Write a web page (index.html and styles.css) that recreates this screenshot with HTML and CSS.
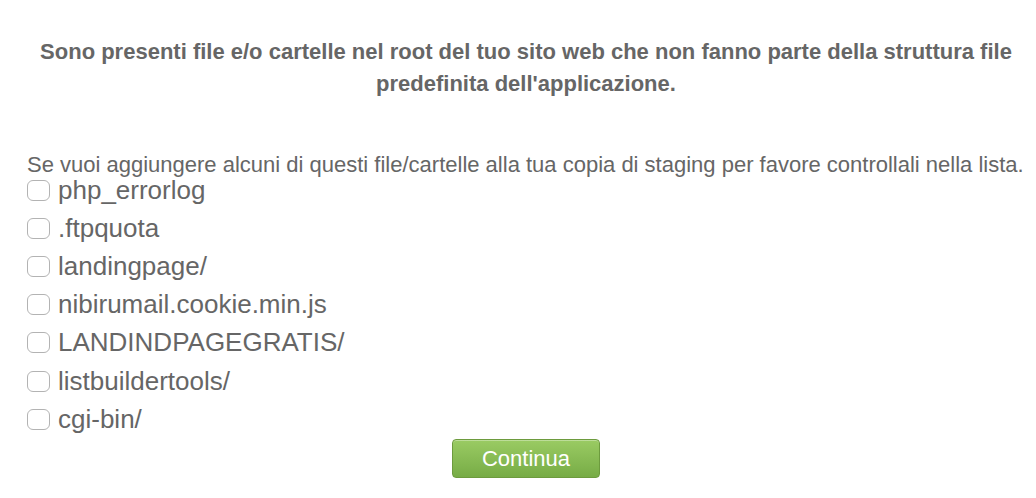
FILE: index.html
```html
<!DOCTYPE html>
<html lang="it">

<head>
    <meta charset="UTF-8">
    <meta name="viewport" content="width=device-width, initial-scale=1.0">
    <title>Staging</title>
    <link rel="stylesheet" href="styles.css">
</head>

<body>
    <main class="panel">
        <h2 class="notice">Sono presenti file e/o cartelle nel root del tuo sito web che non fanno parte della struttura file predefinita dell'applicazione.</h2>

        <p class="hint">Se vuoi aggiungere alcuni di questi file/cartelle alla tua copia di staging per favore controllali nella lista.</p>

        <form class="fileList">
            <label class="fileItem"><input type="checkbox"><span>php_errorlog</span></label>
            <label class="fileItem"><input type="checkbox"><span>.ftpquota</span></label>
            <label class="fileItem"><input type="checkbox"><span>landingpage/</span></label>
            <label class="fileItem"><input type="checkbox"><span>nibirumail.cookie.min.js</span></label>
            <label class="fileItem"><input type="checkbox"><span>LANDINDPAGEGRATIS/</span></label>
            <label class="fileItem"><input type="checkbox"><span>listbuildertools/</span></label>
            <label class="fileItem"><input type="checkbox"><span>cgi-bin/</span></label>

            <div class="actions">
                <button type="button" class="btnGreen">Continua</button>
            </div>
        </form>
    </main>
</body>

</html>
```

FILE: styles.css
```css
body {
    margin: 0;
    font-family: "Liberation Sans", Arial, sans-serif;
    color: #666;
    background: #fff;
}

.panel {
    width: 998px;
    margin: 0 0 0 27px;
    padding-top: 36px;
}

.notice {
    margin: 0;
    font-size: 22px;
    line-height: 32px;
    font-weight: bold;
    text-align: center;
}

.hint {
    margin: 52px 0 0;
    font-size: 22px;
    line-height: 26px;
    white-space: nowrap;
}

.fileList {
    margin-top: -7px;
    display: flex;
    flex-direction: column;
}

.fileItem {
    display: flex;
    align-items: center;
    height: 38.2px;
    font-size: 26px;
}

.fileItem input {
    appearance: none;
    width: 23px;
    height: 21px;
    margin: 0 8px 0 0;
    border: 1px solid #b3b3b3;
    border-radius: 6px;
    background: #fff;
}

.fileItem input:checked {
    background: #7ab04a;
}

.actions {
    display: flex;
    justify-content: center;
    padding-top: 1px;
}

.btnGreen {
    width: 148px;
    height: 39px;
    border: 1px solid #6d9b3e;
    border-radius: 4px;
    background: linear-gradient(#9acb63, #77ac46);
    box-shadow: inset 0 1px 0 rgba(255, 255, 255, 0.35);
    color: #fff;
    font-family: "Liberation Sans", Arial, sans-serif;
    font-size: 22px;
}
```
